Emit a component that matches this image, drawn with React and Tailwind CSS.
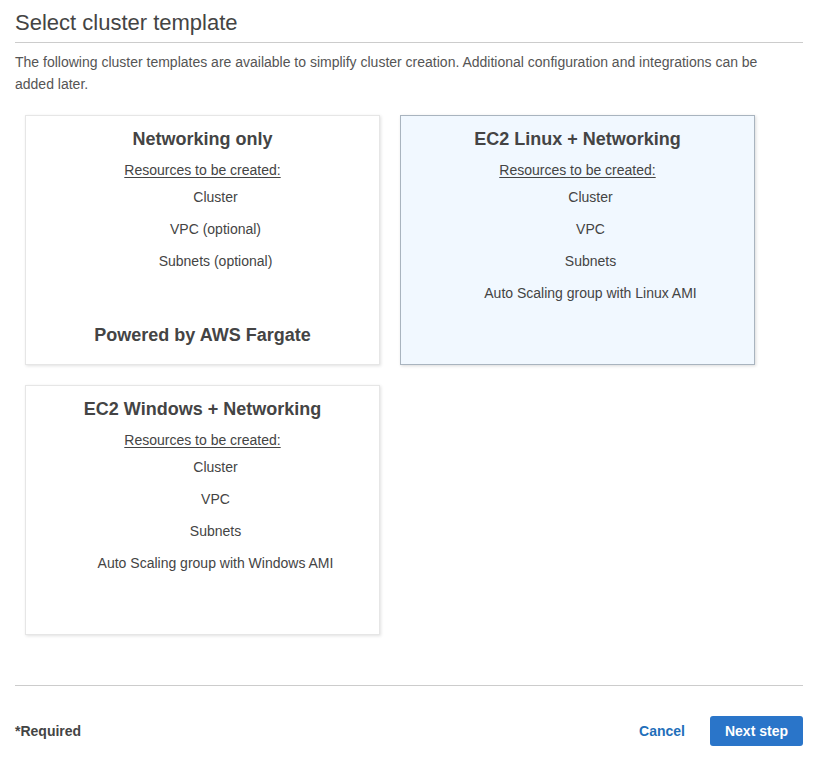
import React from "react";

function Card({ title, items, footer, selected }) {
  return (
    <div
      className={
        "flex h-[250px] w-[355px] flex-col items-center pt-[12px] text-center " +
        (selected
          ? "border border-[#a9b4bf] bg-[#f1f8ff] shadow-[1px_1px_3px_rgba(0,0,0,0.15)]"
          : "border border-[#e6e6e6] bg-white shadow-[1px_1px_3px_rgba(0,0,0,0.12)]")
      }
    >
      <div className="text-[18px] font-bold leading-[22px] text-[#444]">{title}</div>
      <div className="mt-[10px] text-[14px] leading-[20px] text-[#444] underline underline-offset-[2px]">
        Resources to be created:
      </div>
      <ul className="mt-[7px] flex w-full flex-col items-center gap-[12px] pl-[26px]">
        {items.map((it) => (
          <li key={it} className="text-[14px] leading-[20px] text-[#444]">
            {it}
          </li>
        ))}
      </ul>
      {footer && (
        <div className="mt-auto pb-[18px] text-[18px] font-bold leading-[22px] text-[#444]">
          {footer}
        </div>
      )}
    </div>
  );
}

export default function App() {
  return (
    <div className="min-h-[773px] w-[831px] bg-white pl-[15px] pr-[28px] pt-[9px] font-['Liberation_Sans',Arial,sans-serif] text-[#444]">
      <div className="border-b border-[#cccccc] pb-[5px] text-[22px] leading-[28px] text-[#444]">
        Select cluster template
      </div>
      <div className="mt-[8px] max-w-[770px] text-[14px] leading-[22px] text-[#555]">
        The following cluster templates are available to simplify cluster creation. Additional configuration and integrations can be added later.
      </div>
      <div className="mt-[20px] grid grid-cols-[355px_355px] gap-[20px] pl-[10px]">
        <Card
          title="Networking only"
          items={["Cluster", "VPC (optional)", "Subnets (optional)"]}
          footer="Powered by AWS Fargate"
        />
        <Card
          title="EC2 Linux + Networking"
          items={["Cluster", "VPC", "Subnets", "Auto Scaling group with Linux AMI"]}
          selected
        />
        <Card
          title="EC2 Windows + Networking"
          items={["Cluster", "VPC", "Subnets", "Auto Scaling group with Windows AMI"]}
        />
      </div>
      <div className="mt-[50px] border-t border-[#cccccc]" />
      <div className="mt-[30px] flex items-center justify-between">
        <div className="text-[14px] font-bold text-[#444]">*Required</div>
        <div className="flex items-center gap-[25px]">
          <button className="text-[14px] font-bold text-[#1f6fba]">Cancel</button>
          <button className="h-[30px] rounded-[3px] bg-[#2a75c9] px-[15px] text-[14px] font-bold text-white">
            Next step
          </button>
        </div>
      </div>
    </div>
  );
}
